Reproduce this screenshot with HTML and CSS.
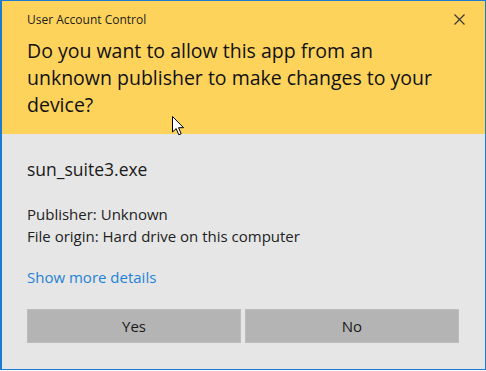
FILE: index.html
```html
<!DOCTYPE html>
<html lang="en">
<head>
    <meta charset="UTF-8">
    <title>User Account Control</title>
    <link rel="stylesheet" href="styles.css">
</head>
<body>

    <div class="dialog">
        <!-- Yellow header -->
        <div class="header">
            <div class="title-row">
                <span class="caption">User Account Control</span>
                <svg class="close" width="11" height="11" viewBox="0 0 11 11">
                    <path d="M0.5 0.5 L10.5 10.5 M10.5 0.5 L0.5 10.5" stroke="#3a3a3a" stroke-width="1.2" fill="none"/>
                </svg>
            </div>
            <div class="question">Do you want to allow this app from an unknown publisher to make changes to your device?</div>
        </div>

        <!-- Details -->
        <div class="body">
            <div class="filename">sun_suite3.exe</div>
            <div class="info">
                <div>Publisher: Unknown</div>
                <div>File origin: Hard drive on this computer</div>
            </div>
            <a class="more" href="#">Show more details</a>
            <div class="buttons">
                <button class="btn">Yes</button>
                <button class="btn">No</button>
            </div>
        </div>

        <!-- mouse pointer -->
        <svg class="pointer" width="13" height="20" viewBox="0 0 13 20">
            <path d="M0.5 0.5 L0.5 16 L4.2 12.6 L6.8 18.8 L9.2 17.8 L6.6 11.7 L11.5 11.7 Z" fill="#fff" stroke="#000" stroke-width="1" stroke-linejoin="round"/>
        </svg>
    </div>

</body>
</html>
```

FILE: styles.css
```css
/* Global */
body {
    margin: 0;
    font-family: 'Open Sans', sans-serif;
    color: #1a1a1a;
    background: #ffffff;
}

.dialog {
    position: relative;
    width: 483px;
    height: 368px;
    border: 1px solid #1b7ad2;
    border-left-width: 2px;
    background-color: #e6e6e6;
}

/* Header */
.header {
    background-color: #fed35c;
    height: 133px;
    padding: 0 24px 0 25px;
    box-sizing: border-box;
}

.title-row {
    display: flex;
    justify-content: space-between;
    align-items: center;
    height: 36px;
}

.caption {
    font-size: 12px;
    color: #222;
}

.close {
    margin-right: -4px;
    margin-top: 1px;
}

.question {
    font-size: 19.5px;
    line-height: 27px;
    color: #111;
    padding-right: 10px;
}

/* Body */
.body {
    padding: 22px 25px 0 25px;
}

.filename {
    font-size: 17.5px;
    line-height: 26px;
    margin-bottom: 21px;
}

.info {
    font-size: 15px;
    line-height: 22px;
    color: #222;
    margin-bottom: 20px;
}

.more {
    display: block;
    font-size: 15px;
    line-height: 20px;
    color: #1f82d6;
    text-decoration: none;
    margin-bottom: 22px;
}

.buttons {
    display: flex;
    gap: 4px;
}

.btn {
    width: 214px;
    height: 34px;
    background-color: #b4b4b4;
    border: 1px solid #bcbcbc;
    font-family: 'Open Sans', sans-serif;
    font-size: 15px;
    color: #1a1a1a;
    padding: 0;
}

.pointer {
    position: absolute;
    left: 170px;
    top: 115px;
}
```
